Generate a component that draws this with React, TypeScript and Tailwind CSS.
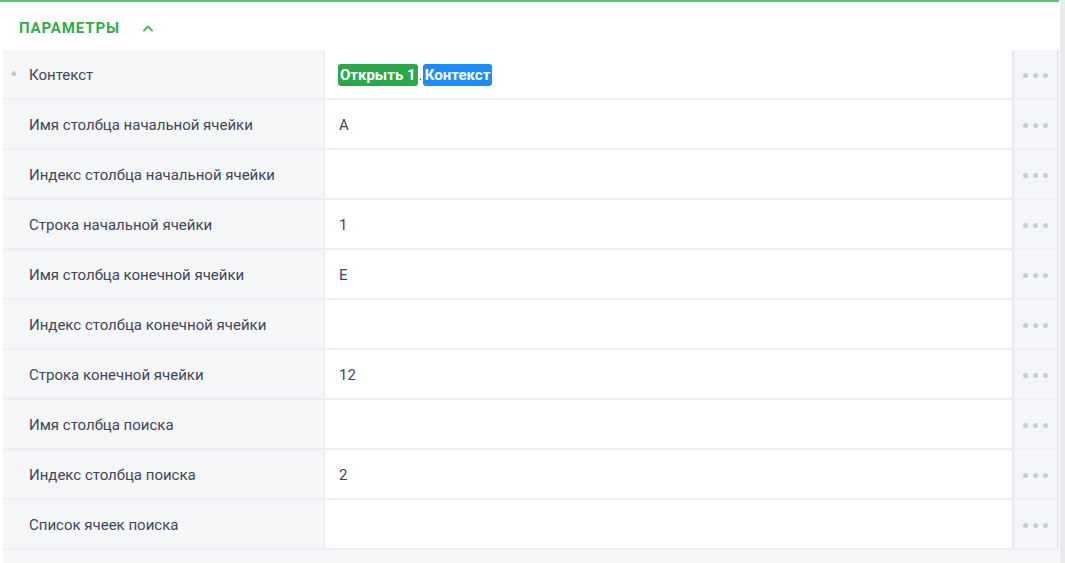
import React from "react";

const rows: { label: string; value?: string; required?: boolean; chips?: boolean }[] = [
  { label: "Контекст", required: true, chips: true },
  { label: "Имя столбца начальной ячейки", value: "A" },
  { label: "Индекс столбца начальной ячейки" },
  { label: "Строка начальной ячейки", value: "1" },
  { label: "Имя столбца конечной ячейки", value: "E" },
  { label: "Индекс столбца конечной ячейки" },
  { label: "Строка конечной ячейки", value: "12" },
  { label: "Имя столбца поиска" },
  { label: "Индекс столбца поиска", value: "2" },
  { label: "Список ячеек поиска" },
];

const Dots = () => (
  <div className="flex gap-[5px]">
    <span className="w-[5px] h-[5px] rounded-full bg-[#c6cbdc]" />
    <span className="w-[5px] h-[5px] rounded-full bg-[#c6cbdc]" />
    <span className="w-[5px] h-[5px] rounded-full bg-[#c6cbdc]" />
  </div>
);

export default function App() {
  return (
    <div
      className="w-[1065px] h-[563px] flex bg-white overflow-hidden"
      style={{ fontFamily: "Roboto, 'Liberation Sans', sans-serif" }}
    >
      <div className="flex-1 flex flex-col">
        <div className="h-[2px] bg-[#5cc36f] mr-[1px]" />
        <div className="h-[48px] flex items-center pl-[19px] pt-[4px]">
          <span className="text-[15px] font-bold text-[#2eae4a] tracking-[0.9px]">ПАРАМЕТРЫ</span>
          <svg className="ml-[22px]" width="12" height="8" viewBox="0 0 12 8" fill="none">
            <path d="M2 6.5L6 2.5L10 6.5" stroke="#3dbb5c" strokeWidth="1.8" strokeLinecap="round" strokeLinejoin="round" />
          </svg>
        </div>
        <div className="flex-1 ml-[3px] mr-[1px] bg-[#f5f6f8] flex flex-col">
          {rows.map((r, i) => (
            <div key={i} className="flex h-[50px] border-b-2 border-[#eceff3]">
              <div className="w-[320px] flex items-center bg-[#f5f6f8] relative pt-[2px]">
                {r.required && (
                  <span className="absolute left-[8px] top-[16px] text-[13px] text-[#a8aebb]">*</span>
                )}
                <span className="pl-[26px] text-[15px] text-[#3f465b]">{r.label}</span>
              </div>
              <div className="flex-1 bg-white flex items-center pl-[13px] pt-[2px] border-l-2 border-[#eceff3]">
                {r.chips ? (
                  <div className="flex items-center">
                    <span className="bg-[#2ba84a] text-white font-bold text-[15px] leading-[22px] px-[2px] rounded-[3px]">
                      Открыть 1
                    </span>
                    <span className="text-[#3d4459] text-[12px] px-[1px] leading-[20px] self-end">.</span>
                    <span className="bg-[#1a8dff] text-white font-bold text-[15px] leading-[22px] px-[2px] rounded-[3px]">
                      Контекст
                    </span>
                  </div>
                ) : (
                  <span className="text-[15px] pl-[1px] text-[#3f465b]">{r.value}</span>
                )}
              </div>
              <div className="w-[47px] bg-[#f4f5f8] border-x-2 border-[#e6e9f0] flex items-center justify-center pt-[2px]">
                <Dots />
              </div>
            </div>
          ))}
        </div>
      </div>
      <div className="w-[5px] bg-[#e9eaec]" />
    </div>
  );
}
